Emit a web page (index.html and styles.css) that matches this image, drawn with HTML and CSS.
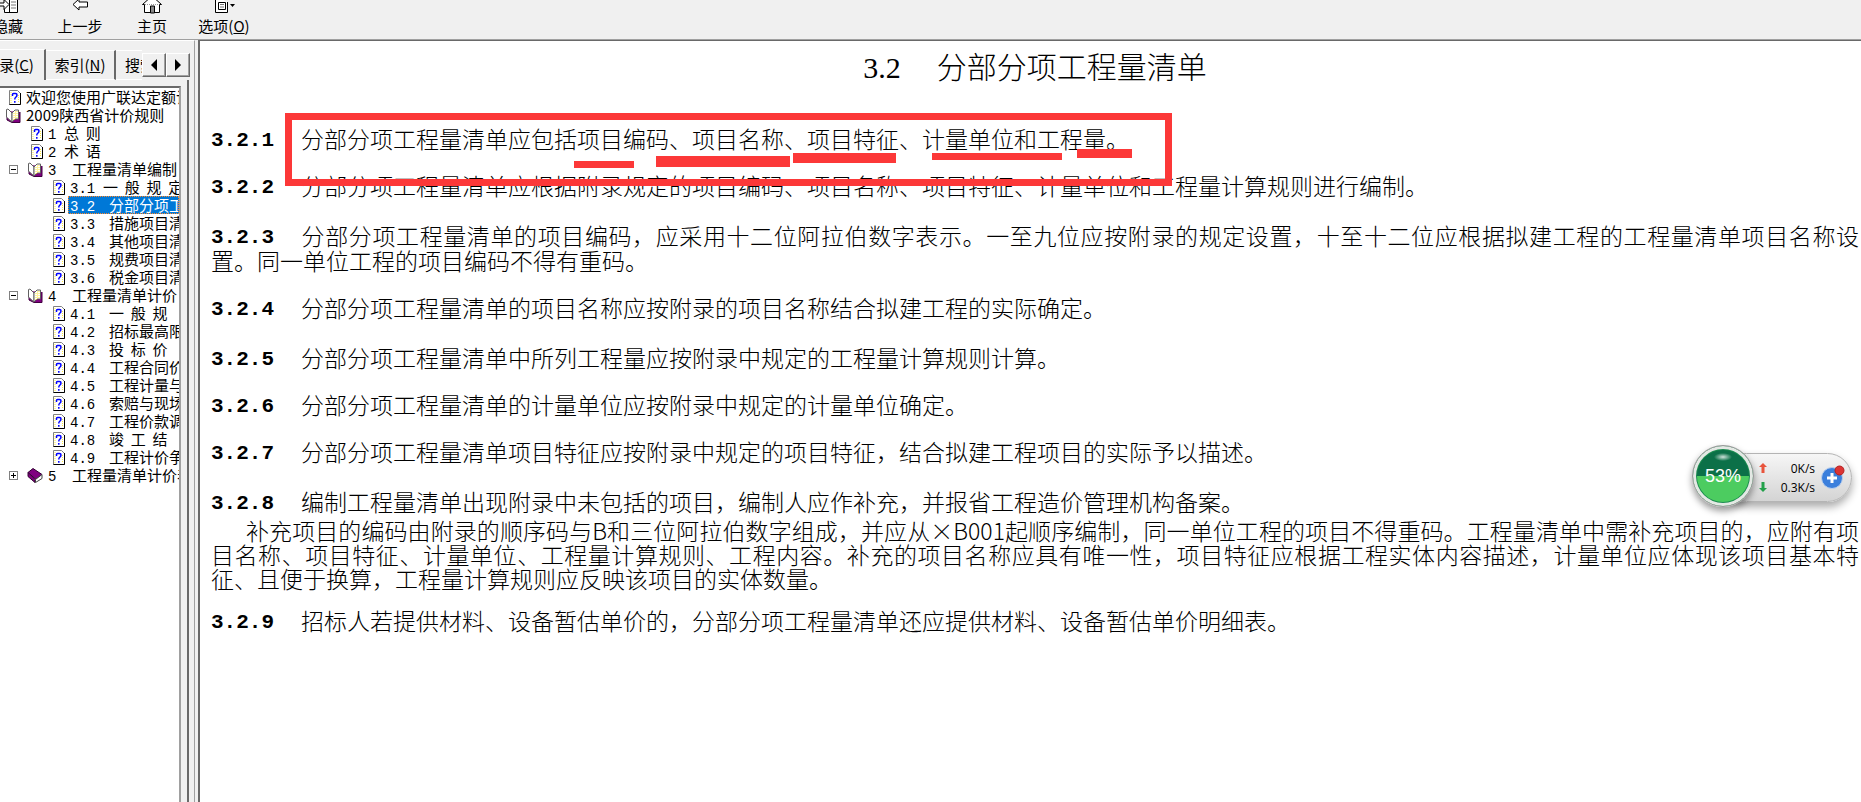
FILE: index.html
```html
<!DOCTYPE html>
<html lang="zh-CN">
<head>
<meta charset="utf-8">
<title>3.2 分部分项工程量清单</title>
<link rel="stylesheet" href="styles.css">
</head>
<body>
<svg class="defs" aria-hidden="true">
  <symbol id="help" viewBox="0 0 12 15">
    <path d="M.5.5h8l3 3v11H.5z" fill="#fff" stroke="#808080"/>
    <path d="M11.5 3v11.5H.5" fill="none" stroke="#000"/>
    <path d="M2 2v11M9.500 5v8" stroke="#ffec3c" stroke-dasharray="1 1"/>
    <path d="M3.500 6V4.500q0-1 1-1h2q1.500 0 1.500 1.500T6.500 7.500Q5.800 8 5.800 9.500M5.800 11v1.800" fill="none" stroke="#00f" stroke-width="1.500"/>
  </symbol>
  <symbol id="open" viewBox="0 0 16 15">
    <path d="M2 3v9l5 2.500h8V4" fill="#800080" stroke="#400040"/>
    <path d="M1.500 1.500 3 1l4 4v9L3 10.500 1.500 9z" fill="#fff" stroke="#606060"/>
    <path d="M7 5l3-3h3.500v9H10l-3 3z" fill="#fff" stroke="#606060"/>
    <path d="M9 5v7M10.500 3.500v7M12 3v7" stroke="#ffe83c" stroke-dasharray="1 1"/>
  </symbol>
  <symbol id="closed" viewBox="0 0 16 15">
    <path d="M1 4.500 6 .5l9 6-6 5z" fill="#800080" stroke="#300030"/>
    <path d="M1 4.500v4l7 6v-3z" fill="#800080" stroke="#300030"/>
    <path d="M8.500 11.500v3l6.500-4v-4z" fill="#fff" stroke="#404040"/>
  </symbol>
</svg>
<div class="app">
  <header class="toolbar">
    <button class="tool"><svg width="22" height="20" viewBox="0 0 22 20"><path d="M7.500 1.500h13v17h-13z" fill="#fff" stroke="#000"/><path d="M12.500 2v16" stroke="#000"/><path d="M14 5h5M14 8h5M14 11h5M14 14h5" stroke="#777"/><path d="M2 9h5V5.500l5 5-5 5V12H2" fill="#fff" stroke="#000"/></svg>隐藏</button>
    <button class="tool"><svg width="22" height="20" viewBox="0 0 22 20"><path d="M4 10.500 10 5v3h8.500v5H10v3z" fill="#fff" stroke="#000"/></svg>上一步</button>
    <button class="tool"><svg width="22" height="20" viewBox="0 0 22 20"><path d="M1.500 10.500 11 2l9.500 8.500h-2v8h-15v-8z" fill="#fff" stroke="#000"/><path d="M4 10.500h14" stroke="#999" stroke-dasharray="1 1"/><path d="M9.500 19v-7h4v7z" fill="#888" stroke="#000"/></svg>主页</button>
    <button class="tool"><svg width="22" height="20" viewBox="0 0 22 20"><path d="M2.500 2v16.500h12V8" fill="#fff" stroke="#000"/><path d="M1 5.500h15M5.500 8.500h7v7h-7z" fill="none" stroke="#000"/><path d="M7 10.500h4M7 13h4" stroke="#777"/><path d="M17 10h5l-2.500 3z"/></svg><span>选项(<u>O</u>)</span></button>
  </header>
  <div class="workspace">
    <nav class="sidebar">
      <div class="tabs" role="tablist">
        <button class="tab active" role="tab" aria-selected="true">目录(<u>C</u>)</button>
        <button class="tab" role="tab">索引(<u>N</u>)</button>
        <button class="tab last" role="tab">搜索</button>
        <span class="arrows">
          <button class="arrow" aria-label="向左"><svg width="6" height="12"><path d="M6 0v12L0 6z"/></svg></button>
          <button class="arrow" aria-label="向右"><svg width="6" height="12"><path d="M0 0v12l6-6z"/></svg></button>
        </span>
      </div>
      <div class="panel">
        <ul class="tree">
          <li class="row"><svg class="ico help"><use href="#help"/></svg><span class="name">欢迎您使用广联达定额计价</span></li>
          <li class="row"><svg class="ico"><use href="#open"/></svg><span class="name">2009陕西省计价规则</span></li>
          <li class="row l1"><svg class="ico help"><use href="#help"/></svg><span class="name"><b class="n tight">1</b>总  则</span></li>
          <li class="row l1"><svg class="ico help"><use href="#help"/></svg><span class="name"><b class="n tight">2</b>术  语</span></li>
          <li class="row l1"><button class="toggle" aria-label="折叠"></button><svg class="ico"><use href="#open"/></svg><span class="name"><b class="n">3</b>工程量清单编制</span></li>
          <li class="row l2"><svg class="ico help"><use href="#help"/></svg><span class="name"><b class="n mid">3.1</b>一  般  规  定</span></li>
          <li class="row l2"><svg class="ico help"><use href="#help"/></svg><span class="name selected"><b class="n wide">3.2</b>分部分项工程量清单</span></li>
          <li class="row l2"><svg class="ico help"><use href="#help"/></svg><span class="name"><b class="n wide">3.3</b>措施项目清单</span></li>
          <li class="row l2"><svg class="ico help"><use href="#help"/></svg><span class="name"><b class="n wide">3.4</b>其他项目清单</span></li>
          <li class="row l2"><svg class="ico help"><use href="#help"/></svg><span class="name"><b class="n wide">3.5</b>规费项目清单</span></li>
          <li class="row l2"><svg class="ico help"><use href="#help"/></svg><span class="name"><b class="n wide">3.6</b>税金项目清单</span></li>
          <li class="row l1"><button class="toggle" aria-label="折叠"></button><svg class="ico"><use href="#open"/></svg><span class="name"><b class="n">4</b>工程量清单计价</span></li>
          <li class="row l2"><svg class="ico help"><use href="#help"/></svg><span class="name"><b class="n wide">4.1</b>一  般  规</span></li>
          <li class="row l2"><svg class="ico help"><use href="#help"/></svg><span class="name"><b class="n wide">4.2</b>招标最高限价</span></li>
          <li class="row l2"><svg class="ico help"><use href="#help"/></svg><span class="name"><b class="n wide">4.3</b>投  标  价</span></li>
          <li class="row l2"><svg class="ico help"><use href="#help"/></svg><span class="name"><b class="n wide">4.4</b>工程合同价款</span></li>
          <li class="row l2"><svg class="ico help"><use href="#help"/></svg><span class="name"><b class="n wide">4.5</b>工程计量与支付</span></li>
          <li class="row l2"><svg class="ico help"><use href="#help"/></svg><span class="name"><b class="n wide">4.6</b>索赔与现场签证</span></li>
          <li class="row l2"><svg class="ico help"><use href="#help"/></svg><span class="name"><b class="n wide">4.7</b>工程价款调整</span></li>
          <li class="row l2"><svg class="ico help"><use href="#help"/></svg><span class="name"><b class="n wide">4.8</b>竣  工  结</span></li>
          <li class="row l2"><svg class="ico help"><use href="#help"/></svg><span class="name"><b class="n wide">4.9</b>工程计价争议</span></li>
          <li class="row l1"><button class="toggle plus" aria-label="展开"></button><svg class="ico"><use href="#closed"/></svg><span class="name"><b class="n">5</b>工程量清单计价表格</span></li>
        </ul>
      </div>
    </nav>
    <main class="doc">
      <h1 class="title"><span class="title-num">3.2</span>分部分项工程量清单</h1>
      <p class="clause"><b class="num">3.2.1</b>分部分项工程量清单应包括项目编码、项目名称、项目特征、计量单位和工程量。</p>
      <p class="clause"><b class="num">3.2.2</b>分部分项工程量清单应根据附录规定的项目编码、项目名称、项目特征、计量单位和工程量计算规则进行编制。</p>
      <p class="clause more"><b class="num">3.2.3</b>分部分项工程量清单的项目编码，应采用十二位阿拉伯数字表示。一至九位应按附录的规定设置，十至十二位应根据拟建工程的工程量清单项目名称设置。同一单位工程的项目编码不得有重码。</p>
      <p class="clause"><b class="num">3.2.4</b>分部分项工程量清单的项目名称应按附录的项目名称结合拟建工程的实际确定。</p>
      <p class="clause more"><b class="num">3.2.5</b>分部分项工程量清单中所列工程量应按附录中规定的工程量计算规则计算。</p>
      <p class="clause"><b class="num">3.2.6</b>分部分项工程量清单的计量单位应按附录中规定的计量单位确定。</p>
      <p class="clause"><b class="num">3.2.7</b>分部分项工程量清单项目特征应按附录中规定的项目特征，结合拟建工程项目的实际予以描述。</p>
      <p class="clause more"><b class="num">3.2.8</b>编制工程量清单出现附录中未包括的项目，编制人应作补充，并报省工程造价管理机构备案。</p>
      <p class="note">补充项目的编码由附录的顺序码与B和三位阿拉伯数字组成，并应从×B001起顺序编制，同一单位工程的项目不得重码。工程量清单中需补充项目的，应附有项目名称、项目特征、计量单位、工程量计算规则、工程内容。补充的项目名称应具有唯一性，项目特征应根据工程实体内容描述，计量单位应体现该项目基本特征、且便于换算，工程量计算规则应反映该项目的实体数量。</p>
      <p class="clause after"><b class="num">3.2.9</b>招标人若提供材料、设备暂估单价的，分部分项工程量清单还应提供材料、设备暂估单价明细表。</p>
      <span class="mark frame"></span>
      <span class="mark m1"></span>
      <span class="mark m2"></span>
      <span class="mark m3"></span>
      <span class="mark m4"></span>
      <span class="mark m5"></span>
    </main>
  </div>
</div>
<aside class="meter">
  <div class="ball"><span>53%</span></div>
  <div class="rates">
    <div class="rate"><svg width="8" height="10"><path d="M4 0l4 4H5.500v6h-3V4H0z" fill="#e8543c"/></svg><span>0K/s</span></div>
    <div class="rate"><svg width="8" height="10"><path d="M4 10l4-4H5.500V0h-3v6H0z" fill="#22a04a"/></svg><span>0.3K/s</span></div>
  </div>
  <button class="boost" aria-label="加速"><svg width="26" height="26" viewBox="0 0 26 26"><circle cx="12" cy="14" r="10.500" fill="#3b7fdc" stroke="#bcd0ec"/><path d="M12 9v10M7 14h10" stroke="#fff" stroke-width="3"/><circle cx="19.500" cy="6.500" r="4.500" fill="#dc3434" stroke="#b42020"/></svg></button>
</aside>
</body>
</html>
```
FILE: styles.css
```css
* { box-sizing: border-box; }
body {
  margin: 0;
  background: #f0f0f0;
  color: #000;
  font-family: "Noto Sans CJK SC", sans-serif;
  font-size: 15px;
}
button {
  font: inherit;
  color: inherit;
  padding: 0;
  border: 0;
  background: none;
}
.defs { position: absolute; width: 0; height: 0; }
.app {
  height: 100vh;
  display: flex;
  flex-direction: column;
  overflow: hidden;
}

.toolbar {
  flex: none;
  display: flex;
  align-items: flex-end;
  height: 40px;
  margin-left: -28px;
  padding-bottom: 3px;
  overflow: hidden;
  border-bottom: 1px solid #a0a0a0;
}
.tool {
  width: 72px;
  display: flex;
  flex-direction: column;
  align-items: center;
  gap: 2px;
  line-height: 20px;
}
.tool svg { flex: none; }

.workspace { flex: 1; display: flex; min-height: 0; }

.sidebar {
  flex: none;
  width: 195px;
  display: flex;
  flex-direction: column;
  margin-right: 3px;
  padding-top: 8px;
  padding-right: 5px;
  border-top: 1px solid #fff;
  border-right: 1px solid #a0a0a0;
}
.tabs {
  flex: none;
  display: flex;
  align-items: flex-end;
  height: 31px;
}
.tab {
  flex: none;
  width: 70px;
  height: 30px;
  padding-bottom: 2px;
  border-top: 1px solid #fff;
  border-right: 2px solid #696969;
  border-bottom: 1px solid #fff;
  white-space: nowrap;
}
.tab.active {
  width: 80px;
  height: 31px;
  margin-left: -34px;
  padding-bottom: 2px;
  padding-left: 8px;
  border-bottom: 0;
}
.tab.last {
  width: 26px;
  padding-left: 9px;
  border-right: 0;
  overflow: hidden;
  text-align: left;
}
.arrows { flex: none; display: flex; height: 27px; }
.arrow {
  width: 24px;
  height: 24px;
  display: grid;
  place-items: center;
  border: 1px solid;
  border-color: #fff #696969 #696969 #fff;
  box-shadow: inset -1px -1px #a0a0a0;
}
.panel {
  flex: 1;
  min-height: 0;
  padding: 6px 6px 0 0;
  border-right: 2px solid #696969;
}
.tree {
  height: 100%;
  margin: 0;
  padding: 0;
  list-style: none;
  background: #fff;
  border-top: 2px solid #696969;
  border-right: 2px solid #a0a0a0;
  overflow: hidden;
}
.row {
  display: flex;
  align-items: center;
  height: 18px;
  padding-left: 5px;
  gap: 3px;
  position: relative;
}
.l1 { padding-left: 27px; }
.l2 { padding-left: 49px; }
.ico { flex: none; width: 16px; height: 15px; }
.ico.help { padding-left: 4px; }
.name {
  flex: 1;
  height: 18px;
  padding-left: 2px;
  line-height: 18px;
  white-space: pre;
  overflow: hidden;
}
.selected {
  padding-left: 1px;
  background: #0078d7;
  color: #fff;
  border: 1px dotted #ff8728;
  line-height: 16px;
}
.n {
  display: inline-block;
  width: 24px;
  font: 14px "Liberation Mono", monospace;
}
.n.tight { width: 16px; }
.n.mid { width: 33px; }
.n.wide { width: 39px; }
.toggle {
  position: absolute;
  left: 9px;
  top: 5px;
  width: 9px;
  height: 9px;
  border: 1px solid #808080;
  background: linear-gradient(#000, #000) center / 5px 1px no-repeat;
}
.toggle.plus {
  background:
    linear-gradient(#000, #000) center / 5px 1px no-repeat,
    linear-gradient(#000, #000) center / 1px 5px no-repeat;
}

.doc {
  flex: 1;
  position: relative;
  padding: 6px 2px 0 11px;
  background: #fff;
  border-top: 1px solid #696969;
  border-left: 2px solid #696969;
  font-size: 23px;
  font-weight: 300;
  line-height: 25px;
  text-align: justify;
}
.title {
  margin: 0 0 43px;
  font-size: 30px;
  font-weight: 300;
  line-height: 36px;
  text-align: center;
}
.title-num { margin-right: 36px; font-family: "Liberation Serif", serif; line-height: 30px; }
.clause { margin: 22px 0 0; }
.title + .clause { margin-top: 0; }
.clause.more { margin-top: 25px; }
.clause.after { margin-top: 18px; }
.note { margin: 4px 0 0; line-height: 24px; text-indent: 35px; }
.num {
  display: inline-block;
  width: 90px;
  height: 25px;
  font: bold 21px/30px "Liberation Mono", monospace;
  vertical-align: top;
}
.mark { position: absolute; background: #fc3838; }
.frame { left: 85px; top: 72px; width: 887px; height: 73px; border: 7px solid #fc3838; background: none; }
.m1 { left: 374px; top: 120px; width: 60px; height: 7px; }
.m2 { left: 456px; top: 115px; width: 134px; height: 11px; }
.m3 { left: 593px; top: 112px; width: 103px; height: 10px; }
.m4 { left: 732px; top: 112px; width: 130px; height: 7px; }
.m5 { left: 877px; top: 108px; width: 55px; height: 9px; }

.meter {
  position: absolute;
  top: 445px;
  right: 9px;
  display: flex;
  align-items: center;
  height: 62px;
  font: 12px "Open Sans", sans-serif;
}
.meter::before {
  content: "";
  position: absolute;
  inset: 8px 0 5px 30px;
  border: 1px solid #b4b4b4;
  border-radius: 25px;
  background: linear-gradient(#f6f6f6, #d4d4d4);
  box-shadow: 0 5px 8px #0005;
}
.meter > * { position: relative; }
.ball {
  width: 62px;
  height: 62px;
  display: grid;
  place-items: center;
  border: 1px solid #999;
  border-radius: 50%;
  background:
    radial-gradient(ellipse 9px 4px at 50% 11px, #fffc, #fff0),
    linear-gradient(#0c7048 50%, #4ccc60 50%) padding-box;
  box-shadow: inset 0 0 0 3px #e4e8e4, inset 0 0 0 4px #1c8c50, 0 4px 7px #0006;
  color: #fff;
  font: 18px "Liberation Sans", sans-serif;
}
.rates { width: 61px; padding: 3px 0 0 5px; }
.rate { display: flex; align-items: center; justify-content: space-between; height: 19px; }
.boost { display: grid; margin: 2px 6px 0 5px; }
```
